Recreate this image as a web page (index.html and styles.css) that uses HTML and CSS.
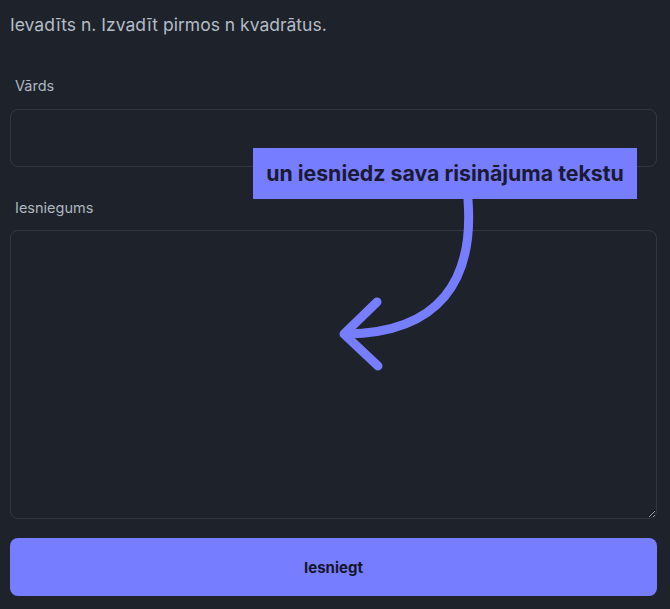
FILE: index.html
```html
<!DOCTYPE html>
<html lang="lv">
<head>
<meta charset="utf-8">
<link rel="stylesheet" href="styles.css">
</head>
<body>
<main class="page">
  <p class="intro">Ievadīts n. Izvadīt pirmos n kvadrātus.</p>
  <form class="form">
    <label class="field">
      <span class="label">Vārds</span>
      <input class="input" type="text">
    </label>
    <label class="field">
      <span class="label">Iesniegums</span>
      <textarea class="textarea"></textarea>
    </label>
    <button class="submit" type="button">Iesniegt</button>
  </form>
  <div class="callout">un iesniedz sava risinājuma tekstu</div>
  <svg class="arrow" width="670" height="609" viewBox="0 0 670 609">
    <path d="M468 200 C474 280 440 333 346 334" fill="none" stroke="#777dff" stroke-width="9" stroke-linecap="round"/>
    <path d="M377 302 L344 334 L378 366" fill="none" stroke="#777dff" stroke-width="9" stroke-linecap="round" stroke-linejoin="round"/>
  </svg>
</main>
</body>
</html>
```
FILE: styles.css
```css
html, body {
  margin: 0;
  background: #1e232b;
}
body {
  font-family: Inter, "Noto Sans", sans-serif;
  color: #b4bcc6;
}
.page {
  position: relative;
  width: 670px;
  height: 609px;
  box-sizing: border-box;
  padding: 13px 13px 0 10px;
}
.intro {
  margin: 0;
  font-size: 17.5px;
  line-height: 24px;
  color: #b4bcc6;
}
.form {
  display: flex;
  flex-direction: column;
  margin-top: 40px;
}
.field {
  display: flex;
  flex-direction: column;
}
.label {
  font-size: 14.5px;
  line-height: 18px;
  padding-left: 5px;
  color: #aeb6bf;
  margin-bottom: 14px;
}
.input {
  box-sizing: border-box;
  height: 58px;
  background: transparent;
  border: 1px solid #323840;
  border-radius: 8px;
  margin-bottom: 32px;
}
.textarea {
  box-sizing: border-box;
  height: 289px;
  background: transparent;
  border: 1px solid #323840;
  border-radius: 8px;
  margin: -1px 0 19px;
  resize: vertical;
  color-scheme: dark;
}
.submit {
  height: 58px;
  border: none;
  border-radius: 8px;
  background: #777dff;
  color: #15162a;
  font-family: Inter, "Noto Sans", sans-serif;
  font-weight: 700;
  font-size: 15px;
}
.callout {
  position: absolute;
  left: 253px;
  top: 148px;
  width: 384px;
  height: 51px;
  box-sizing: border-box;
  background: #777dff;
  color: #1a1a33;
  font-weight: 700;
  font-size: 21.3px;
  line-height: 51px;
  text-align: center;
}
.arrow {
  position: absolute;
  left: 0;
  top: 0;
  pointer-events: none;
}
```
